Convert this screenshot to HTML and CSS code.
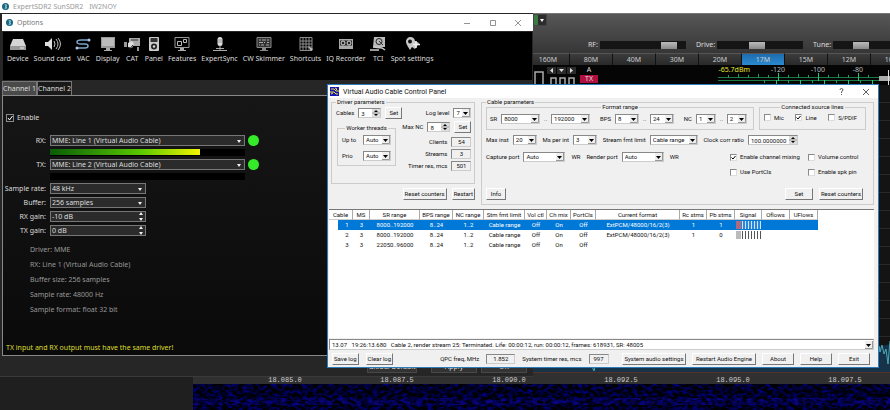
FILE: index.html
```html
<!DOCTYPE html>
<html lang="en">
<head>
    <meta charset="utf-8">
    <title>ExpertSDR2 SunSDR2</title>
    <link rel="stylesheet" href="styles.css">
</head>
<body>
    <div class="app">
        <div class="app-title">
            <svg class="logo" viewBox="0 0 8 8"><circle cx="4" cy="4" r="4" fill="#14677f"/><path d="M3 2h2v1.500H3.500M3 6h2V4.500H3.500" fill="none" stroke="#d8f0f4" stroke-width=".8"/></svg>
            <span>ExpertSDR2 SunSDR2</span>
            <span class="call">IW2NOY</span>
        </div>
        <div class="top-bar">
            <button class="green-drop" aria-label="Menu"></button>
            <div class="sliders">
                <label>RF: <input type="range" value="87"></label>
                <label>Drive: <input type="range" value="45"></label>
                <label>Tune: <input type="range" value="28"></label>
            </div>
        </div>
        <div class="bands">
            <button>160M</button><button>80M</button><button>40M</button><button>30M</button><button>20M</button><button class="active">17M</button><button>15M</button><button>12M</button><button>10M</button>
        </div>
        <div class="receiver">
            <svg class="digits" viewBox="0 0 62 20">
                <g fill="none" stroke="#aaa" stroke-width="1.500">
                    <path d="M2 20V7h8v13M18 20v-7h5v7M27 20v-7h5v7M36 20v-7h5v7"/>
                </g>
                <g fill="#2b2b2b"><path d="M14 2h9v7h-9zM24 2h9v7h-9zM34 2h9v7h-9z"/></g>
                <path d="M20 3v5l-3-2.500zM26 4h5l-2.500 3zM37 3v5l3-2.500z" fill="#ddd"/>
            </svg>
            <div class="tx-box"><span>A</span><b>TX</b></div>
            <span class="dbm">-65.7dBm</span>
            <svg class="meter" viewBox="0 0 172 20">
                <path d="M0 12.500h163M0 15.500h163" stroke="#1a7a44"/>
                <path d="M60.500 8v8M100.500 8v8M140.500 8v8M58.500 15v5M82.500 15v5M106.500 15v5M130.500 15v5M154.500 15v5" stroke="#25c878"/>
                <path d="M10.500 10v3M20.500 9v4M30.500 10v3M40.500 9v4M50.500 10v3M70.500 10v3M80.500 9v4M90.500 10v3M110.500 10v3M120.500 9v4M130.500 10v3M150.500 10v3M46.500 15v3M70.500 15v3M94.500 15v3M118.500 15v3M142.500 15v3" stroke="#1f9a58"/>
                <g fill="#bbb" font-size="7" text-anchor="middle"><text x="60" y="7">-120</text><text x="100" y="7">-100</text><text x="140" y="7">-80</text></g>
                <path d="M161 11h11v5h-11z" fill="#aaa"/><path d="M170.500 5v15" stroke="#ddd"/>
            </svg>
        </div>
        <div class="work">
            <div class="side"></div>
            <div class="pan">
                <div class="spectrum">
                    <svg class="trace" viewBox="0 0 360 34" preserveAspectRatio="xMaxYMax slice">
                        <path d="M0 34V24H349V9l11-3V34z" fill="#17334a"/>
                        <path d="M0 28L2 32 4 26 60 24 64 33 66 25 106 24 108 29 110 24 346 24 349 8 350 14 352 7 354 16 356 11 358 26 360 3" fill="none" stroke="#49a9b5"/>
                    </svg>
                </div>
                <div class="scale"><span>18.085.0</span><span>18.087.5</span><span>18.090.0</span><span>18.092.5</span><span>18.095.0</span><span>18.097.5</span></div>
                <svg class="waterfall" preserveAspectRatio="none">
                    <filter id="noise" x="0" y="0" width="100%" height="100%" color-interpolation-filters="sRGB">
                        <feTurbulence type="fractalNoise" baseFrequency=".2 .3" numOctaves="3" seed="7"/>
                        <feColorMatrix values="0 0 0 0 0  0 0 0 0 0  1.200 0 0 0 -.45  0 0 0 0 1"/>
                    </filter>
                    <filter id="band" x="0" y="0" width="100%" height="100%" color-interpolation-filters="sRGB">
                        <feTurbulence type="fractalNoise" baseFrequency=".15 .3" numOctaves="3" seed="3"/>
                        <feColorMatrix values="0 0 0 0 .04  0 0 0 0 .02  0 0 0 0 .5  3 0 0 0 -1.200"/>
                    </filter>
                    <rect width="100%" height="26" filter="url(#noise)"/>
                    <rect y="14" width="100%" height="7" filter="url(#band)"/>
                </svg>
            </div>
        </div>
    </div>

    <div class="options">
        <div class="options-title">
            <svg class="logo" viewBox="0 0 8 8"><circle cx="4" cy="4" r="4" fill="#14677f"/><path d="M3 2h2v1.500H3.500M3 6h2V4.500H3.500" fill="none" stroke="#d8f0f4" stroke-width=".8"/></svg>
            <span>Options</span>
            <svg class="win-btns" viewBox="0 0 60 10"><path d="M1 5.500h6M27.500 2.500h5v5h-5zM52 2l6 6M58 2l-6 6" fill="none" stroke="#777" stroke-width=".8"/></svg>
        </div>
        <div class="tools">
            <button><svg viewBox="0 0 18 16"><path d="M4 3h10l3 7H1z" fill="#d5d5d5"/><path d="M1 10h16v4H1z" fill="#999"/><path d="M11 12h4" stroke="#eee"/></svg>Device</button>
            <button><svg viewBox="0 0 18 16"><path d="M2 6h3l4-4v12L5 10H2z" fill="#ddd"/><path d="M11 5q2 3 0 6M13 3q4 5 0 10M15 2q5 6 0 12" fill="none" stroke="#bbb"/></svg>Sound card</button>
            <button><svg viewBox="0 0 18 16"><path d="M16 4H7q-4 0-4 2t4 2h4q3 0 3 2t-3 2H2" fill="none" stroke="#7ba6cc" stroke-width="1.500"/><circle cx="15" cy="4" r="1.500" fill="#a9c6e4"/><circle cx="3" cy="12" r="1.500" fill="#a9c6e4"/></svg>VAC</button>
            <button><svg viewBox="0 0 18 16"><path d="M2 1h14v11H2z" fill="#999"/><path d="M3 2h12v8H3z" fill="#bbb"/><path d="M7 12h4v2H7zM5 14h8v1H5z" fill="#aaa"/></svg>Display</button>
            <button><svg viewBox="0 0 18 16"><path d="M6 2h11v8H6z" fill="#aaa"/><path d="M1 6h3v5H1zM14 11h2v4h-2z" fill="#999"/><path d="M5 7l4-2 2 3-2 4-4-1z" fill="#ddd"/><path d="M8 4h7" stroke="#333"/><path d="M6 14l4-5" stroke="#222"/></svg>CAT</button>
            <button><svg viewBox="0 0 18 16"><rect x="4" y="1" width="10" height="14" rx="1" fill="#ccc"/><path d="M5.500 2h7v4h-7z" fill="#333"/><circle cx="9" cy="10.500" r="3" fill="#222"/><circle cx="9" cy="10.500" r="1.200" fill="#ddd"/></svg>Panel</button>
            <button><svg viewBox="0 0 18 16"><path d="M2 1.500h14v10H2z" fill="none" stroke="#999"/><path d="M4.500 5.500h4v4h-4zM10.500 3.500h3v3h-3z" fill="none" stroke="#bbb"/><path d="M7 12h4v2H7zM5 14h8v1H5z" fill="#aaa"/></svg>Features</button>
            <button><svg viewBox="0 0 18 16"><rect x="6.500" y="1" width="5" height="9" rx="2.500" fill="#ddd"/><path d="M9 10v4M5 12.500h8M2 14.500h14" stroke="#aaa"/><path d="M7 4h4M7 6h4" stroke="#777" stroke-width=".7"/></svg>ExpertSync</button>
            <button><svg viewBox="0 0 18 16"><path d="M2 1.500h14v10H2z" fill="#333" stroke="#888"/><path d="M4 4h2M7 4h4M12 4h2M4 6.500h4M9 6.500h1M12 6.500h2M4 9h1M6 9h3M11 9h3" stroke="#aaa"/><path d="M7 12h4v2H7zM5 14h8v1H5z" fill="#888"/></svg>CW Skimmer</button>
            <button><svg viewBox="0 0 18 16"><path d="M3 1.500h12v13H3zM3 5h12M3 8h12M3 11h12M6 2v12M9 2v12M12 2v12" fill="none" stroke="#8c8c8c"/><path d="M11 10l5 3-2 2z" fill="#bbb"/></svg>Shortcuts</button>
            <button><svg viewBox="0 0 18 16"><path d="M2 3h14v10H2z" fill="#aaa"/><path d="M3 4.500h12v5H3z" fill="#222"/><circle cx="6" cy="7" r="2" fill="none" stroke="#ddd"/><circle cx="12" cy="7" r="2" fill="none" stroke="#ddd"/></svg>IQ Recorder</button>
            <button><svg viewBox="0 0 18 16"><path d="M5 1h11v10H4z" fill="#bbb"/><circle cx="10" cy="5.500" r="3" fill="none" stroke="#222"/><path d="M10 5l4 4" stroke="#333"/><path d="M4 11l9 1 3 2M1 14h9" fill="none" stroke="#ccc" stroke-width="1.500"/></svg>TCI</button>
            <button><svg viewBox="0 0 18 16"><path d="M7 14Q3 8 3 6a4 4 0 0 1 9-1l4 2-4 6-3-2z" fill="#c8c8c8"/><circle cx="7" cy="5.500" r="2" fill="#111"/><path d="M13 5v7M10 8.500h7" stroke="#eee" stroke-width="1.500"/></svg>Spot settings</button>
        </div>
        <div class="tabs"><button class="current">Channel 1</button><button>Channel 2</button></div>
        <div class="channel">
            <label class="enable"><input type="checkbox" checked> Enable</label>
            <div class="settings">
                <label for="rx">RX:</label>
                <div class="device"><select id="rx"><option>MME: Line 1 (Virtual Audio Cable)</option></select><i class="led"></i></div>
                <div class="level"><div style="width: 77%"></div></div>
                <label for="tx">TX:</label>
                <div class="device"><select id="tx"><option>MME: Line 2 (Virtual Audio Cable)</option></select><i class="led"></i></div>
                <div class="level"></div>
                <label for="rate">Sample rate:</label>
                <select id="rate" class="short"><option>48 kHz</option></select>
                <label for="buffer">Buffer:</label>
                <select id="buffer" class="short"><option>256 samples</option></select>
                <label for="rxgain">RX gain:</label>
                <input id="rxgain" class="short" type="text" value="-10 dB">
                <label for="txgain">TX gain:</label>
                <input id="txgain" class="short" type="text" value="0 dB">
            </div>
            <div class="info">
                <p>Driver: MME</p>
                <p>RX: Line 1 (Virtual Audio Cable)</p>
                <p>Buffer size: 256 samples</p>
                <p>Sample rate: 48000 Hz</p>
                <p>Sample format: float 32 bit</p>
            </div>
            <p class="warning">TX input and RX output must have the same driver!</p>
        </div>
        <div class="options-foot">
            <button class="wide">Global Default</button><button>Apply</button><button>OK</button>
        </div>
    </div>

    <div class="vac">
        <div class="vac-title">
            <svg class="vac-icon" viewBox="0 0 9 9"><path d="M0 0h9v9H0z" fill="#1414b8"/><path d="M1 2h3l2 2h3M0 5h4l2 2h2M5 1l2 1-2 2M3 6L1 7" fill="none" stroke="#f4e828"/></svg>
            <span>Virtual Audio Cable Control Panel</span>
            <svg class="win-btns" viewBox="0 0 30 10"><path d="M1 3q0-1.500 1.500-1.500T4 3L2.500 5v1M2.500 7v1M24 2l6 6M30 2l-6 6" fill="none" stroke="#333" stroke-width=".8"/></svg>
        </div>
        <div class="vac-body">
            <div class="params">
                <div class="driver">
                    <fieldset>
                        <legend>Driver parameters</legend>
                        <div class="driver-cols">
                            <div class="driver-left">
                                <div class="row cables"><label for="cables">Cables</label><input id="cables" class="spin w23" type="text" value="3"><button class="w17">Set</button></div>
                                <fieldset class="threads">
                                    <legend>Worker threads</legend>
                                    <div class="row"><label for="upto">Up to</label><select id="upto" class="w28"><option>Auto</option></select></div>
                                    <div class="row"><label for="prio">Prio</label><select id="prio" class="w28"><option>Auto</option></select></div>
                                </fieldset>
                            </div>
                            <div class="driver-right">
                                <div class="row"><label for="log">Log level</label><select id="log" class="w18"><option>7</option></select></div>
                                <div class="row"><label for="maxnc">Max NC</label><input id="maxnc" class="spin w23" type="text" value="8"><button class="w17">Set</button></div>
                                <div class="row stat"><span>Clients</span><output>54</output></div>
                                <div class="row stat"><span>Streams</span><output>3</output></div>
                                <div class="row stat"><span>Timer res, mcs</span><output>501</output></div>
                            </div>
                        </div>
                    </fieldset>
                    <div class="driver-btns"><button>Reset counters</button><button>Restart</button></div>
                </div>
                <fieldset class="cable">
                    <legend>Cable parameters</legend>
                    <div class="groups">
                        <fieldset class="format">
                            <legend>Format range</legend>
                            <div class="row">
                                <label for="sr">SR</label><select id="sr" class="w39"><option>8000</option></select><span>..</span><select aria-label="SR max" class="w39"><option>192000</option></select>
                                <label for="bps" class="sep">BPS</label><select id="bps" class="w24"><option>8</option></select><span>..</span><select aria-label="BPS max" class="w24"><option>24</option></select>
                                <label for="nc" class="sep">NC</label><select id="nc" class="w20"><option>1</option></select><span>..</span><select aria-label="NC max" class="w20"><option>2</option></select>
                            </div>
                        </fieldset>
                        <fieldset class="lines">
                            <legend>Connected source lines</legend>
                            <div class="row">
                                <label><input type="checkbox">Mic</label>
                                <label><input type="checkbox" checked>Line</label>
                                <label><input type="checkbox">S/PDIF</label>
                            </div>
                        </fieldset>
                    </div>
                    <div class="row limits">
                        <label>Max inst <select class="w24"><option>20</option></select></label>
                        <label>Ms per int <select class="w24"><option>3</option></select></label>
                        <label>Stream fmt limit <select class="w48"><option>Cable range</option></select></label>
                        <label>Clock corr ratio <input class="spin w50" type="text" value="100.0000000"></label>
                    </div>
                    <div class="ports">
                        <div class="row">
                            <label>Capture port <select class="w42"><option>Auto</option></select></label><span>WR</span>
                            <label>Render port <select class="w42"><option>Auto</option></select></label><span>WR</span>
                        </div>
                        <div class="checks">
                            <label><input type="checkbox" checked>Enable channel mixing</label>
                            <label><input type="checkbox">Volume control</label>
                            <label><input type="checkbox">Use PortCls</label>
                            <label><input type="checkbox">Enable spk pin</label>
                        </div>
                    </div>
                    <div class="cable-btns"><button class="w20">Info</button><button class="set">Set</button><button>Reset counters</button></div>
                </fieldset>
            </div>
            <div class="list">
                <table>
                    <colgroup><col class="c24"><col class="c17"><col class="c50"><col class="c33"><col class="c31"><col class="c41"><col class="c22"><col class="c24"><col class="c25"><col class="c84"><col class="c27"><col class="c28"><col class="c27"><col class="c28"><col class="c28"></colgroup>
                    <thead>
                        <tr><th>Cable</th><th>MS</th><th>SR range</th><th>BPS range</th><th>NC range</th><th>Stm fmt limit</th><th>Vol ctl</th><th>Ch mix</th><th>PortCls</th><th>Current format</th><th>Rc stms</th><th>Pb stms</th><th>Signal</th><th>Oflows</th><th>UFlows</th></tr>
                    </thead>
                    <tbody>
                        <tr class="selected"><td>1</td><td>3</td><td>8000..192000</td><td>8..24</td><td>1..2</td><td>Cable range</td><td>Off</td><td>On</td><td>Off</td><td>ExtPCM/48000/16/2(3)</td><td>1</td><td>1</td><td><i class="signal"></i></td><td></td><td></td></tr>
                        <tr><td>2</td><td>3</td><td>8000..192000</td><td>8..24</td><td>1..2</td><td>Cable range</td><td>Off</td><td>On</td><td>Off</td><td>ExtPCM/48000/16/2(3)</td><td>1</td><td>0</td><td><i class="signal"></i></td><td></td><td></td></tr>
                        <tr><td>3</td><td>3</td><td>22050..96000</td><td>8..24</td><td>1..2</td><td>Cable range</td><td>Off</td><td>On</td><td>Off</td><td></td><td></td><td></td><td></td><td></td><td></td></tr>
                    </tbody>
                </table>
            </div>
            <select class="log" aria-label="Log"><option>13.07 &nbsp; 19:26:13.680 &nbsp; Cable 2, render stream 25: Terminated. Life: 00:00:12, run: 00:00:12, frames: 618931, SR: 48005</option></select>
            <div class="vac-foot">
                <button>Save log</button><button>Clear log</button>
                <span class="freq">QPC freq, MHz</span><output class="w29">1.852</output>
                <span>System timer res, mcs</span><output class="w20">997</output>
                <div class="actions"><button class="w64">System audio settings</button><button class="w64">Restart Audio Engine</button><button class="w32">About</button><button class="w32">Help</button><button class="w32">Exit</button></div>
            </div>
        </div>
    </div>
</body>
</html>
```
FILE: styles.css
```css
* {
    box-sizing: border-box;
}
body {
    margin: 0;
    background: #1f1f1f;
    font-family: "Noto Sans", sans-serif;
    font-size: 7px;
    line-height: 8px;
    overflow: hidden;
}
button, input, select {
    font: inherit;
    color: inherit;
    margin: 0;
    padding: 0;
    border-radius: 0;
}
select, input[type="text"], input[type="checkbox"], input[type="range"] {
    appearance: none;
}
button {
    white-space: nowrap;
}
p {
    margin: 0;
}
.logo {
    width: 7px;
    height: 7px;
}

/* main radio window */
.app {
    display: flex;
    flex-direction: column;
    height: 100vh;
}
.app-title {
    display: flex;
    align-items: center;
    gap: 4px;
    height: 13px;
    padding-left: 2px;
    background: white;
    color: #999;
}
.app-title .call {
    margin-left: 2px;
}
.top-bar {
    height: 40px;
    padding-left: 533px;
    background: linear-gradient(#575757, #363636);
    border-top: 1px solid #777;
    color: #ddd;
}
.green-drop {
    display: block;
    width: 14px;
    height: 12px;
    border: 1px solid #444;
    background: #2c2c2c url("data:image/svg+xml,%3Csvg xmlns='http://www.w3.org/2000/svg' viewBox='0 0 12 10'%3E%3Cpath d='M0 0h4v10H0z' fill='%233d7a42'/%3E%3Cpath d='M6 4h4L8 7z' fill='%23fff'/%3E%3C/svg%3E");
}
.sliders {
    display: flex;
    gap: 10px;
    margin: 15px 0 0 55px;
    white-space: nowrap;
}
.sliders label {
    display: flex;
    align-items: center;
    gap: 2px;
}
.sliders input {
    width: 86px;
    height: 8px;
    background: #151515;
}
.sliders input::-webkit-slider-thumb {
    appearance: none;
    width: 16px;
    height: 7px;
    background: linear-gradient(#bbb, #888);
}
.bands {
    display: flex;
    height: 12px;
    padding-left: 527px;
    background: #151515;
    overflow: hidden;
}
.bands button {
    flex: 0 0 43px;
    border: 0;
    border-right: 1px solid #111;
    border-top: 1px solid #555;
    background: linear-gradient(#3c3c3c, #292929);
    color: #ccc;
}
.bands .active {
    background: linear-gradient(#1d6cae, #2c8ace);
}
.receiver {
    display: flex;
    height: 20px;
    padding-left: 533px;
    background: #050505;
    overflow: hidden;
}
.digits {
    flex: none;
    width: 62px;
    height: 20px;
    margin-right: -15px;
}
.tx-box {
    display: flex;
    flex-direction: column;
    align-items: center;
    width: 18px;
    padding-top: 1px;
    color: #ddd;
}
.tx-box b {
    width: 18px;
    margin-top: 1px;
    background: #b01040;
    font-weight: normal;
    text-align: center;
}
.dbm {
    width: 120px;
    margin: 1px 0 0 32px;
    text-align: right;
    color: #e6e62a;
}
.meter {
    flex: none;
    width: 172px;
    height: 20px;
    margin-left: -32px;
}
.work {
    display: flex;
    flex: 1;
    min-height: 0;
}
.side {
    width: 193px;
    background: #1f1f1f;
}
.pan {
    display: flex;
    flex: 1;
    flex-direction: column;
    min-width: 0;
}
.spectrum {
    display: flex;
    flex: 1;
    min-height: 0;
    align-items: flex-end;
    justify-content: flex-end;
    background: repeating-linear-gradient(#141414 0 17px, #292929 17px 18px);
}
.trace {
    width: 360px;
    height: 34px;
}
.scale {
    display: flex;
    height: 12px;
    padding: 3px 0 0 36px;
    border-top: 1px solid #55332b;
    background: #303030;
    color: #ccc;
    font-family: "Liberation Mono", monospace;
    overflow: hidden;
}
.scale span {
    flex: 0 0 112px;
    text-align: center;
}
.waterfall {
    display: block;
    width: 100%;
    height: 26px;
    background: #02020c;
}

/* options window */
.options {
    position: absolute;
    left: 0;
    top: 13px;
    width: 533px;
    padding: 1px 0 0 2px;
    border-bottom: 1px solid #3a3a3a;
    background: #262626;
    color: #ddd;
}
.options-title {
    display: flex;
    align-items: center;
    gap: 4px;
    height: 17px;
    padding: 0 10px 0 4px;
    background: white;
    color: #777;
}
.options-title .win-btns {
    width: 60px;
    height: 10px;
    margin-left: auto;
}
.tools {
    display: flex;
    align-items: flex-start;
    gap: 5px;
    height: 48px;
    margin: 1px 1px 0;
    padding: 4px 0 0 4px;
    background: black;
}
.tools button {
    display: flex;
    flex-direction: column;
    align-items: center;
    gap: 3px;
    min-width: 15px;
    border: 0;
    background: none;
}
.tools svg {
    width: 18px;
    height: 16px;
    margin: 0 -2px;
}
.tabs {
    display: flex;
    height: 14px;
    margin-top: 1px;
}
.tabs button {
    width: 35px;
    border: 1px solid #777;
    border-bottom: 0;
    background: #1a1a1a;
}
.tabs .current {
    background: #4a4a4a;
}
.channel {
    height: 261px;
    padding: 17px 4px 0 3px;
    border: 1px solid #888;
    border-right: 0;
    background: linear-gradient(#161616, #0a0a0a);
}
.enable {
    display: flex;
    align-items: center;
    gap: 3px;
    height: 10px;
}
.enable input {
    width: 8px;
    height: 8px;
    border: 1px solid #888;
}
.enable input:checked {
    background: url("data:image/svg+xml,%3Csvg xmlns='http://www.w3.org/2000/svg' viewBox='0 0 6 6'%3E%3Cpath d='M1 3l1.500 2L5.500 1' fill='none' stroke='%23fff'/%3E%3C/svg%3E");
}
.settings {
    display: grid;
    grid-template-columns: 40px 1fr;
    align-items: center;
    column-gap: 4px;
    row-gap: 3px;
    margin-top: 12px;
}
.settings label {
    text-align: right;
    white-space: nowrap;
    justify-self: end;
}
.settings select, .settings input {
    width: 195px;
    height: 11px;
    padding-left: 1px;
    border: 1px solid #777;
    background: #2b2b2b url("data:image/svg+xml,%3Csvg xmlns='http://www.w3.org/2000/svg' width='6' height='4'%3E%3Cpath d='M1 1h4L3 4z' fill='%23eee'/%3E%3C/svg%3E") no-repeat right 2px center;
}
.settings .short {
    width: 96px;
}
.settings input {
    background-image: url("data:image/svg+xml,%3Csvg xmlns='http://www.w3.org/2000/svg' width='6' height='9'%3E%3Cpath d='M1 3h4L3 0zM1 6h4L3 9z' fill='%23eee'/%3E%3C/svg%3E");
    background-position: right 1px center;
}
.device {
    display: flex;
    align-items: center;
    gap: 3px;
    height: 11px;
}
.led {
    width: 11px;
    height: 11px;
    border-radius: 50%;
    background: #35ea28;
}
.level {
    grid-column: 2;
    width: 195px;
    height: 7px;
    background: black;
}
.level div {
    height: 6px;
    background: linear-gradient(to right, #085c08, #58c800 60%, #f4f400);
}
.info {
    padding: 6px 0 0 24px;
    line-height: 15px;
    color: #999;
}
.warning {
    margin-top: 27px;
    color: #dede2e;
}
.options-foot {
    display: flex;
    gap: 4px;
    height: 20px;
    padding: 5px 6px 3px;
    justify-content: flex-end;
}
.options-foot button {
    width: 46px;
    border: 1px solid #484848;
    background: #333;
}
.options-foot .wide {
    width: 50px;
    margin-right: 10px;
}

/* virtual audio cable window */
.vac {
    position: absolute;
    left: 327px;
    right: 11px;
    top: 84px;
    border: 1px solid #2b7cb8;
    background: #f0f0f0;
    color: #111;
    font-family: Roboto, sans-serif;
}
.vac-title {
    display: flex;
    align-items: center;
    gap: 4px;
    height: 13px;
    padding: 0 9px 0 2px;
    background: white;
}
.vac-icon {
    width: 9px;
    height: 9px;
}
.vac-title .win-btns {
    width: 30px;
    height: 10px;
    margin-left: auto;
}
.vac-body {
    font-size: 6px;
}
.vac fieldset {
    min-width: 0;
    margin: 0;
    padding: 0 4px;
    border: 1px solid #ccc;
}
.vac legend {
    padding: 0 1px;
    height: 8px;
    white-space: nowrap;
}
.vac button {
    flex: none;
    height: 12px;
    padding: 0 1px;
    border: 1px solid #fff;
    border-right-color: #777;
    border-bottom-color: #777;
    background: #f0f0f0;
}
.vac select, .vac input[type="text"], .vac output {
    flex: none;
    height: 10px;
    padding-left: 2px;
    border: 1px solid #888;
    border-right-color: #ccc;
    border-bottom-color: #ccc;
    background: white;
}
.vac select {
    background: white url("data:image/svg+xml,%3Csvg xmlns='http://www.w3.org/2000/svg' width='8' height='8'%3E%3Cpath d='M0 0h8v8H0z' fill='%23eee'/%3E%3Cpath d='M7.500 0v7.500H0' fill='none' stroke='%23999'/%3E%3Cpath d='M1 3h5L3.500 6z'/%3E%3C/svg%3E") no-repeat right center;
}
.vac input.spin {
    background: white url("data:image/svg+xml,%3Csvg xmlns='http://www.w3.org/2000/svg' width='8' height='8'%3E%3Cpath d='M0 0h8v8H0z' fill='%23ddd'/%3E%3Cpath d='M0 4h8' stroke='%23999'/%3E%3Cpath d='M2 3h4L4 1zM2 5h4L4 7z'/%3E%3C/svg%3E") no-repeat right center;
}
.vac output {
    width: 20px;
    padding: 0;
    background: none;
    text-align: center;
}
.vac input[type="checkbox"] {
    flex: none;
    width: 7px;
    height: 7px;
    border: 1px solid #888;
    border-right-color: #ddd;
    border-bottom-color: #ddd;
    background: white;
}
.vac input[type="checkbox"]:checked {
    background: white url("data:image/svg+xml,%3Csvg xmlns='http://www.w3.org/2000/svg' viewBox='0 0 5 5'%3E%3Cpath d='M.5 2.500l1.500 1.500L4.500 1' fill='none' stroke='%23000'/%3E%3C/svg%3E");
}
.w17 { width: 17px; }
.w18 { width: 18px; }
.vac .w20 { width: 20px; }
.w23 { width: 23px; }
.w24 { width: 24px; }
.w28 { width: 28px; }
.vac .w29 { width: 29px; }
.w32 { width: 32px; }
.w39 { width: 39px; }
.w42 { width: 42px; }
.w48 { width: 48px; }
.w50 { width: 50px; }
.w64 { width: 64px; }

.row {
    display: flex;
    align-items: center;
    gap: 4px;
    white-space: nowrap;
}
.vac label {
    display: flex;
    align-items: center;
    gap: 4px;
}
.params {
    display: flex;
    gap: 6px;
    padding: 0 4px 0 3px;
}
.driver {
    width: 144px;
    flex: none;
}
.driver > fieldset {
    height: 86px;
}
.driver-cols {
    display: flex;
    justify-content: space-between;
}
.cables {
    height: 14px;
}
.vac .threads {
    width: 59px;
    margin: 4px 0 0 1px;
    height: 42px;
}
.threads legend {
    margin: 0 auto;
}
.threads .row {
    height: 16px;
    justify-content: space-between;
}
.driver-right .row {
    height: 14px;
    justify-content: flex-end;
}
.driver-right .stat {
    height: 12px;
}
.driver-right .row:nth-child(3) {
    margin-top: 2px;
}
.driver-btns {
    display: flex;
    justify-content: flex-end;
    gap: 5px;
    margin-top: 4px;
}
.cable {
    flex: 1;
    height: 107px;
}
.groups {
    display: flex;
    gap: 5px;
    margin-top: -3px;
}
.vac .format {
    width: 268px;
    height: 27px;
    padding: 0 3px;
}
.format legend, .lines legend {
    margin: 0 auto;
}
.format .row {
    justify-content: space-between;
    gap: 2px;
    height: 16px;
    padding-right: 3px;
}
.format .sep {
    margin-left: 6px;
}
.vac .lines {
    width: 107px;
    height: 27px;
}
.lines .row {
    justify-content: space-between;
    height: 13px;
    padding-right: 4px;
}
.limits {
    justify-content: space-between;
    height: 20px;
    padding-right: 71px;
}
.ports {
    display: flex;
    justify-content: space-between;
    align-items: flex-start;
}
.ports .row {
    height: 14px;
    gap: 6px;
}
.checks {
    display: grid;
    grid-template-columns: 78px 56px;
    row-gap: 7px;
    margin: 3px 5px 0 0;
    white-space: nowrap;
}
.lines label, .checks label {
    gap: 3px;
}
.cable-btns {
    display: flex;
    gap: 6px;
    margin: 12px 6px 0 0;
}
.cable-btns .set {
    width: 28px;
    margin-left: auto;
}
.list {
    height: 129px;
    margin: 4px 4px 0 1px;
    border-top: 1px solid #777;
    background: white;
    overflow: hidden;
}
.list table {
    table-layout: fixed;
    width: 489px;
    border-collapse: separate;
    border-spacing: 0;
    white-space: nowrap;
    text-align: center;
}
.c17 { width: 17px; }
.c22 { width: 22px; }
.c24 { width: 24px; }
.c25 { width: 25px; }
.c27 { width: 27px; }
.c28 { width: 28px; }
.c31 { width: 31px; }
.c33 { width: 33px; }
.c41 { width: 41px; }
.c50 { width: 50px; }
.c84 { width: 84px; }
.list th {
    height: 10px;
    padding: 0;
    border-right: 1px solid #aaa;
    border-bottom: 1px solid #ccc;
    font-weight: normal;
}
.list td {
    height: 10px;
    padding: 0;
}
.list td:first-child {
    padding-left: 12px;
}
.selected {
    color: white;
}
.selected td {
    background: #0078d7;
}
.selected td:first-child {
    background: linear-gradient(to right, white 9px, #0078d7 9px);
}
.signal {
    display: block;
    width: 25px;
    height: 8px;
    margin-left: 1px;
    background: linear-gradient(to right, #bbb 5px, transparent 5px), repeating-linear-gradient(to right, #555 0 1px, #fff 1px 3px);
}
.selected .signal {
    background: linear-gradient(to right, #b06a80 5px, transparent 5px), repeating-linear-gradient(to right, #cfe6fa 0 1px, #2a86d8 1px 3px);
}
.vac .log {
    display: block;
    width: calc(100% - 5px);
    height: 11px;
    margin: 1px 4px 0 1px;
}
.vac-foot {
    display: flex;
    align-items: center;
    gap: 7px;
    height: 17px;
    padding: 0 8px 0 4px;
    white-space: nowrap;
}
.freq {
    margin-left: 40px;
}
.actions {
    display: flex;
    gap: 6px;
    margin-left: auto;
}
```
